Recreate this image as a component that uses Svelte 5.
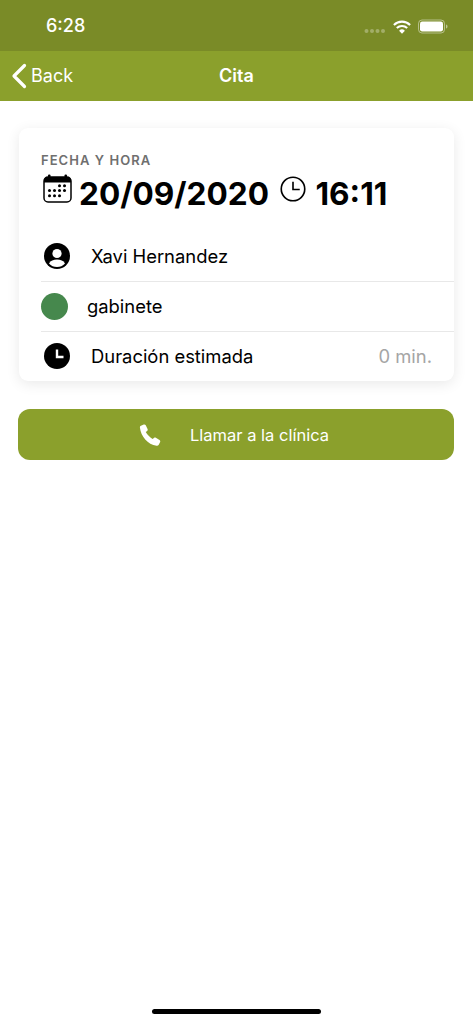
<script>
  const dots = [
    [16.500,11.700],[21.500,11.700],
    [6.500,16.500],[11.500,16.500],[16.500,16.500],[21.500,16.500],
    [6.500,21.800],[11.500,21.800],[16.500,21.800]
  ];
</script>

<div class="page">
  <header class="status">
    <span class="time">6:28</span>
    <div class="indicators">
      <svg class="signal" width="22" height="6" viewBox="0 0 22 6">
        <circle cx="2.500" cy="3" r="2"/><circle cx="8" cy="3" r="2"/><circle cx="13.500" cy="3" r="2"/><circle cx="19" cy="3" r="2"/>
      </svg>
      <svg class="wifi" width="18" height="14" viewBox="0 0 18 14">
        <path d="M9 13.800 6.100 10.700a4.200 4.200 0 0 1 5.800 0Z" fill="#fff"/>
        <path d="M3.800 8.100a7.500 7.500 0 0 1 10.400 0" fill="none" stroke="#fff" stroke-width="2.100"/>
        <path d="M0.900 4.900a11.700 11.700 0 0 1 16.200 0" fill="none" stroke="#fff" stroke-width="2.100"/>
      </svg>
      <svg class="battery" width="30" height="15" viewBox="0 0 30 15">
        <rect x="0.500" y="1" width="26" height="13" rx="3.500" fill="none" stroke="#fff" stroke-opacity=".45"/>
        <rect x="2" y="2.500" width="23" height="10" rx="2.200" fill="#fff"/>
        <path d="M28 5.500c1 .3 1.500 1 1.500 2s-.5 1.700-1.500 2Z" fill="#fff" fill-opacity=".5"/>
      </svg>
    </div>
  </header>

  <nav class="navbar">
    <div class="back">
      <svg width="16" height="26" viewBox="0 0 16 26">
        <path d="M13.500 2.500 3 13l10.500 10.500" fill="none" stroke="#fff" stroke-width="3.200" stroke-linecap="round" stroke-linejoin="round"/>
      </svg>
      <span>Back</span>
    </div>
    <h1>Cita</h1>
  </nav>

  <main class="content">
    <section class="card">
      <div class="head">
        <div class="label">FECHA Y HORA</div>
        <div class="datetime">
          <svg class="cal" width="29" height="29" viewBox="0 0 29 29">
            <rect x="1" y="3" width="27" height="25" rx="4" fill="#fff" stroke="#000" stroke-width="1.500"/>
            <path d="M1 8.500V6.500A3.500 3.500 0 0 1 4.500 3h20A3.500 3.500 0 0 1 28 6.500V8.500Z"/>
            <rect x="5" y="0.500" width="2.500" height="5" rx="1"/>
            <rect x="21.500" y="0.500" width="2.500" height="5" rx="1"/>
            {#each dots as d}
              <circle cx={d[0]} cy={d[1]} r="1.500"/>
            {/each}
          </svg>
          <span class="date">20/09/2020</span>
          <svg class="clock" width="26" height="26" viewBox="0 0 27 27">
            <circle cx="13.500" cy="13.500" r="12.200" fill="none" stroke="#000" stroke-width="1.700"/>
            <path d="M13.500 6v8h7" fill="none" stroke="#000" stroke-width="1.700"/>
          </svg>
          <span class="date hour">16:11</span>
        </div>
      </div>

      <div class="row">
        <svg class="ico" width="26" height="26" viewBox="0 0 26 26">
          <circle cx="13" cy="13" r="13"/>
          <circle cx="13" cy="10.500" r="4.600" fill="#fff"/>
          <path d="M5 20.500c1.500-3 4.500-4 8-4s6.500 1 8 4a10.800 10.800 0 0 1-16 0Z" fill="#fff"/>
        </svg>
        <span class="text">Xavi Hernandez</span>
      </div>
      <div class="row alt">
        <span class="dot"></span>
        <span class="text">gabinete</span>
      </div>
      <div class="row">
        <svg class="ico" width="26" height="26" viewBox="0 0 26 26">
          <circle cx="13" cy="13" r="13"/>
          <path d="M13 6.500V14h6.500" fill="none" stroke="#fff" stroke-width="2.400"/>
        </svg>
        <span class="text">Duración estimada</span>
        <span class="value">0 min.</span>
      </div>
    </section>

    <button class="call">
      <svg width="22" height="22" viewBox="1.500 0.500 21.500 22">
        <path fill="#fff" d="M2.200 4.200C2 3.400 2.400 2.600 3.200 2.200L6 1C6.800.7 7.600 1 8 1.800L9.800 5.500C10.100 6.200 10 7 9.400 7.400L8 8.600C9.500 11.200 12 14 14.800 15.400L16.200 14.400C16.700 13.900 17.500 13.800 18.100 14.200L21.800 16.500C22.500 17 22.700 17.800 22.400 18.500L21 21.300C20.600 22.100 19.700 22.500 18.800 22.300 10 21 3 12.500 2.200 4.200Z"/>
      </svg>
      <span>Llamar a la clínica</span>
    </button>
  </main>

  <div class="home"></div>
</div>

<style>
  :global(body) {
    margin: 0;
    background: #fff;
  }
  .page {
    height: 1024px;
    display: flex;
    flex-direction: column;
    font-family: Inter, "Liberation Sans", sans-serif;
    color: #000;
    overflow: hidden;
  }
  .status {
    height: 51px;
    background: #7a8b27;
    display: flex;
    align-items: center;
    justify-content: space-between;
    padding: 0 25px 0 46px;
    box-sizing: border-box;
    color: #fff;
  }
  .time {
    font-size: 18px;
    font-weight: 500;
  }
  .indicators {
    display: flex;
    align-items: center;
    gap: 7px;
    padding-top: 2px;
  }
  .signal {
    fill: #fff;
    opacity: 0.3;
    margin-top: 8.500px;
  }
  .navbar {
    height: 50px;
    background: #8ba02c;
    position: relative;
    display: flex;
    align-items: center;
    justify-content: center;
    color: #fff;
  }
  .back {
    position: absolute;
    left: 11px;
    top: 12px;
    display: flex;
    align-items: center;
    gap: 4px;
    font-size: 18px;
    line-height: 26px;
  }
  h1 {
    margin: 0 0 1px;
    font-size: 18px;
    font-weight: 600;
  }
  .content {
    padding: 27px 19px 0 18px;
    display: flex;
    flex-direction: column;
    gap: 28px;
  }
  .card {
    height: 253px;
    margin-left: 1px;
    border-radius: 9px;
    background: #fff;
    box-shadow: 0 3px 14px rgba(0, 0, 0, 0.09);
    overflow: hidden;
    box-sizing: border-box;
  }
  .head {
    height: 103px;
    padding: 25px 0 0 22px;
    box-sizing: border-box;
  }
  .label {
    font-size: 13px;
    font-weight: 600;
    line-height: 15px;
    letter-spacing: 1.050px;
    color: #6f6f6f;
  }
  .datetime {
    display: flex;
    align-items: flex-start;
    margin-top: 6px;
    height: 44px;
  }
  .cal {
    margin: 0 0 0 2px;
  }
  .date {
    font-size: 31.600px;
    font-weight: 700;
    line-height: 40px;
    margin: 0 0 0 7px;
  }
  .clock {
    margin: 2px 0 0 11px;
  }
  .hour {
    margin-left: 9.500px;
  }
  .row {
    height: 50px;
    margin-left: 22px;
    display: flex;
    align-items: center;
    position: relative;
    box-sizing: border-box;
    padding-left: 3px;
    padding-right: 22px;
  }
  .row + .row {
    border-top: 1px solid #e8e8e8;
    padding-bottom: 1px;
  }
  .ico {
    flex: none;
  }
  .text {
    font-size: 18.400px;
    margin-left: 21px;
  }
  .alt {
    padding-left: 0;
  }
  .alt .text {
    margin-left: 19px;
  }
  .dot {
    width: 27px;
    height: 27px;
    border-radius: 50%;
    background: #46884d;
    flex: none;
  }
  .value {
    margin-left: auto;
    font-size: 18.400px;
    color: #a5a5a5;
  }
  .call {
    height: 51px;
    border: 0;
    border-radius: 12px;
    background: #8ba02c;
    color: #fff;
    font: inherit;
    font-size: 16.500px;
    display: flex;
    align-items: center;
    padding: 0 0 0 121px;
    gap: 29px;
  }
  .home {
    width: 169px;
    height: 5.500px;
    border-radius: 3px;
    background: #000;
    margin: auto auto 0;
    position: relative;
    top: -10px;
  }
</style>
